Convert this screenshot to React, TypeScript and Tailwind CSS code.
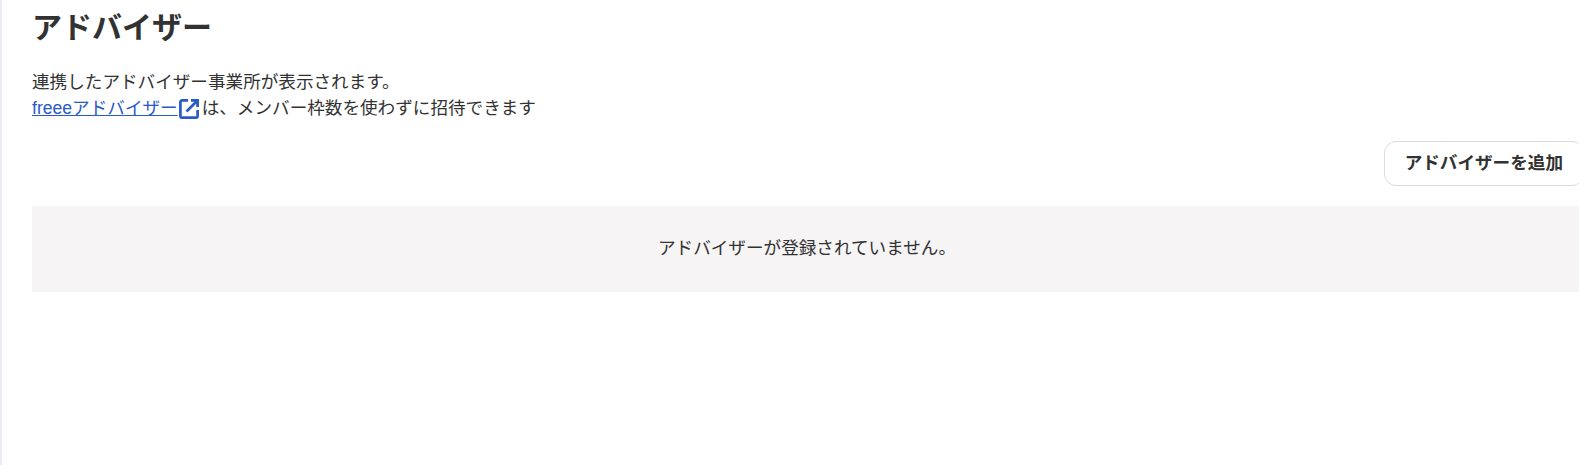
export default function App() {
	return (
		<div className="h-[465px] w-[1579px] overflow-hidden bg-white text-[#323232] font-['Liberation_Sans','Noto_Sans_CJK_JP',sans-serif]">
			<div className="h-full border-l-2 border-[#ebebf8] pl-[30px]">
				<h1 className="text-[30px] leading-[30px] font-bold pt-[13px] h-[41px] box-content">アドバイザー</h1>
				<div className="mt-[15px] text-[17.6px] leading-[26px]">
					<p>連携したアドバイザー事業所が表示されます。</p>
					<p className="flex items-center">
						<a href="#" className="text-[#285ac8] underline">freeeアドバイザー</a>
						<svg viewBox="0 0 20 20" className="w-[20px] h-[20px] ml-[1px] mr-[3px] mt-[1px] text-[#285ac8]" fill="none" stroke="currentColor" strokeWidth="2.7">
							<path d="M9 1.4H3A1.6 1.6 0 0 0 1.4 3v14A1.6 1.6 0 0 0 3 18.6h14a1.6 1.6 0 0 0 1.6-1.6v-6" />
							<path d="M12 1.4h6.6V8M18 2 7.5 12.5" />
						</svg>
						<span>は、メンバー枠数を使わずに招待できます</span>
					</p>
				</div>
				<div className="flex justify-end mt-[20px] -mr-[5px]">
					<button className="h-[45px] px-[20px] rounded-[12px] border border-[#dcdcdc] bg-white text-[17.6px] font-bold whitespace-nowrap">アドバイザーを追加</button>
				</div>
				<div className="mt-[20px] h-[86px] pl-[3px] pb-[2px] bg-[#f6f4f5] flex items-center justify-center text-[17.6px]">
					アドバイザーが登録されていません。
				</div>
			</div>
		</div>
	);
}
